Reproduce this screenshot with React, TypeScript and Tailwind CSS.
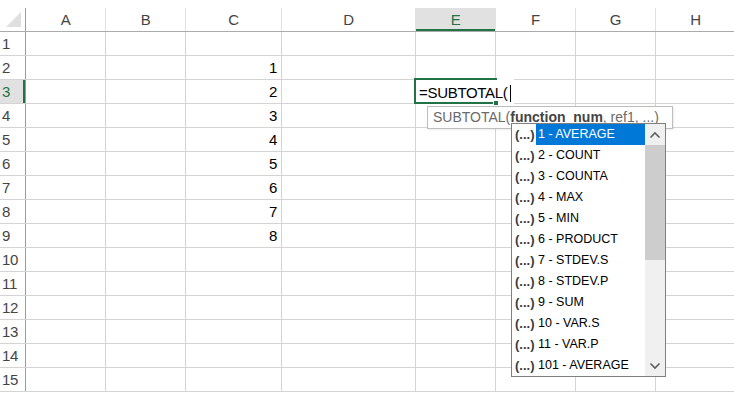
import React from 'react';

const cols = [
  { l: 'A', w: 'w-[80px]' },
  { l: 'B', w: 'w-[80px]' },
  { l: 'C', w: 'w-[96px]' },
  { l: 'D', w: 'w-[134px]' },
  { l: 'E', w: 'w-[80px]' },
  { l: 'F', w: 'w-[80px]' },
  { l: 'G', w: 'w-[80px]' },
  { l: 'H', w: 'w-[80px]' },
];

const items = [
  '1 - AVERAGE',
  '2 - COUNT',
  '3 - COUNTA',
  '4 - MAX',
  '5 - MIN',
  '6 - PRODUCT',
  '7 - STDEV.S',
  '8 - STDEV.P',
  '9 - SUM',
  '10 - VAR.S',
  '11 - VAR.P',
  '101 - AVERAGE',
];

const values: Record<number, string> = { 2: '1', 3: '2', 4: '3', 5: '4', 6: '5', 7: '6', 8: '7', 9: '8' };

export default function App() {
  const rows = Array.from({ length: 15 }, (_, i) => i + 1);
  return (
    <div className="relative w-[734px] h-[394px] overflow-hidden bg-white font-['Liberation_Sans',Arial,sans-serif] text-[15px] tracking-[-0.3px]">
      <div className="pt-[8px]">
        {/* header row */}
        <div className="flex h-[24px] border-b border-[#ababab]">
          <div className="shrink-0 w-[26px] h-full border-r border-[#9b9b9b] flex items-start justify-start">
            <svg width="25" height="23" viewBox="0 0 25 23">
              <polygon points="6,19 21,4 21,19" fill="#dfdfdf" />
            </svg>
          </div>
          {cols.map((c) => {
            const sel = c.l === 'E';
            return (
              <div
                key={c.l}
                className={`shrink-0 ${c.w} h-full border-r border-[#e1e1e1] text-center leading-[23px] ${
                  sel ? 'bg-[#e1e1e1] text-[#217346] shadow-[inset_0_-2px_0_#217346]' : 'text-[#444444]'
                }`}
              >
                {c.l}
              </div>
            );
          })}
        </div>
        {rows.map((r) => {
          const sel = r === 3;
          return (
            <div key={r} className="flex h-[24px] border-b border-[#d4d4d4]">
              <div
                className={`shrink-0 w-[26px] h-full border-r border-[#9b9b9b] pl-[2px] leading-[24px] ${
                  sel ? 'bg-[#e1e1e1] text-[#217346] shadow-[inset_-2px_0_0_#217346]' : 'text-[#444444]'
                }`}
              >
                {r}
              </div>
              {cols.map((c) => (
                <div
                  key={c.l}
                  className={`shrink-0 ${c.w} h-full border-r border-[#d4d4d4] leading-[24px] text-right pr-[4px] text-black`}
                >
                  {c.l === 'C' ? values[r] ?? '' : ''}
                </div>
              ))}
            </div>
          );
        })}
      </div>

      {/* active cell editor */}
      <div className="absolute left-[414px] top-[78px] w-[100px] h-[26px] bg-white" />
      <div className="absolute left-[414px] top-[78px] w-[83px] h-[26px] border-t-2 border-b-2 border-l-2 border-[#217346]" />
      <div className="absolute left-[419px] top-[81px] leading-[24px] text-black flex items-center whitespace-nowrap">
        <span>=SUBTOTAL(</span>
        <span className="inline-block w-px h-[17px] bg-black ml-[2px]" />
      </div>
      <div className="absolute left-[493px] top-[100px] w-[6px] h-[6px] bg-[#217346] border border-white" />

      {/* tooltip */}
      <div className="absolute left-[427px] top-[106px] w-[246px] h-[23px] border border-[#bdbdbd] bg-white px-[5px] text-[14px] tracking-normal leading-[21px] text-[#6b6b6b] whitespace-nowrap shadow-[1px_1px_2px_rgba(0,0,0,0.08)]">
        SUBTOTAL(<span className="font-bold text-[#444444]">function_num</span>, ref1, ...)
      </div>

      {/* autocomplete list */}
      <div className="absolute left-[511px] top-[123px] w-[155px] h-[254px] border border-[#7f7f7f] bg-white flex tracking-normal">
        <div className="flex-1 flex flex-col">
          {items.map((it, i) => (
            <div key={it} className="h-[21px] flex items-center shrink-0">
              <div className="w-[24px] pl-[3px] text-[13px] font-bold text-[#3a3a3a] whitespace-nowrap">
                (...)
              </div>
              <div
                className={`flex-1 h-full flex items-center pl-[2px] text-[12.5px] whitespace-nowrap ${
                  i === 0 ? 'bg-[#0078d7] text-white' : 'text-black'
                }`}
              >
                {it}
              </div>
            </div>
          ))}
        </div>
        <div className="w-[20px] h-full bg-[#f0f0f0] flex flex-col">
          <div className="h-[21px] flex items-center justify-center shrink-0">
            <svg width="12" height="8" viewBox="0 0 12 8">
              <polyline points="1.5,6.5 6,2 10.5,6.5" fill="none" stroke="#5f5f5f" strokeWidth="1.6" />
            </svg>
          </div>
          <div className="h-[115px] bg-[#cdcdcd] shrink-0" />
          <div className="flex-1" />
          <div className="h-[21px] flex items-center justify-center shrink-0">
            <svg width="12" height="8" viewBox="0 0 12 8">
              <polyline points="1.5,1.5 6,6 10.5,1.5" fill="none" stroke="#5f5f5f" strokeWidth="1.6" />
            </svg>
          </div>
        </div>
      </div>
    </div>
  );
}
